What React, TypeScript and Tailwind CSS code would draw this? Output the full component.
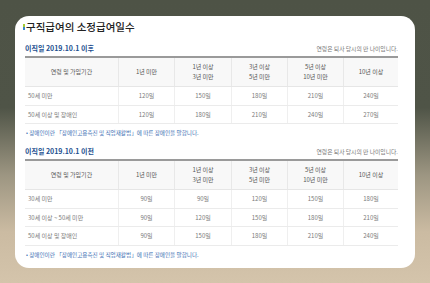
import React from "react";

const cols = "grid-cols-[93px_56px_57px_56px_56px_55px]";

type Row = { label: string; vals: string[] };

function Table({ rows }: { rows: Row[] }) {
  const headers: string[][] = [
    ["연령 및 가입기간"],
    ["1년 미만"],
    ["1년 이상", "3년 미만"],
    ["3년 이상", "5년 미만"],
    ["5년 이상", "10년 미만"],
    ["10년 이상"],
  ];
  return (
    <div className="w-[373px] border-t-2 border-[#9a9a9a]">
      <div className={`grid ${cols} h-[29px] bg-[#f8f8f8] border-b border-[#e6e6e6]`}>
        {headers.map((h, i) => (
          <div
            key={i}
            className={`flex flex-col items-center justify-center text-[6px] leading-[10px] text-[#555] ${i > 0 ? "border-l border-[#e8e8e8]" : ""}`}
          >
            {h.map((t, j) => (
              <span key={j}>{t}</span>
            ))}
          </div>
        ))}
      </div>
      {rows.map((r, ri) => (
        <div key={ri} className={`grid ${cols} h-[18.5px] border-b border-[#ebebeb]`}>
          <div className="flex items-center pl-[3px] text-[6px] text-[#7a7a7a]">{r.label}</div>
          {r.vals.map((v, vi) => (
            <div key={vi} className="flex items-center justify-center border-l border-[#efefef] text-[6px] text-[#7a7a7a]">
              {v}
            </div>
          ))}
        </div>
      ))}
    </div>
  );
}

function Section({ title, rows, top }: { title: string; rows: Row[]; top: string }) {
  return (
    <div className={top}>
      <div className="flex items-end justify-between w-[373px] h-[14px] pb-[3px]">
        <span className="text-[7px] font-bold text-[#1d4f8f] leading-[9px]">{title}</span>
        <span className="text-[5.8px] text-[#777] leading-[8px]">연령은 퇴사 당시의 만 나이입니다.</span>
      </div>
      <Table rows={rows} />
      <div className="mt-[5px] text-[5.6px] leading-[8px] text-[#3d6fb3] pl-[1px]">
        • 장애인이란 「장애인고용촉진 및 직업재활법」에 따른 장애인을 말합니다.
      </div>
    </div>
  );
}

export default function App() {
  return (
    <div
      className="w-[430px] h-[283px] overflow-hidden pt-[16px] pl-[15px] bg-[linear-gradient(to_bottom,#4e5346_0%,#4f5447_38%,#9d9682_62%,#cbbba2_82%,#d4c4ab_100%)]"
      style={{ fontFamily: '"Noto Sans CJK KR", "Noto Sans", sans-serif' }}
    >
      <div className="w-[400px] h-[252px] rounded-[14px] bg-white pl-[10px] pt-[3px]">
        <div className="flex items-center h-[16px]">
          <span className="w-[2px] h-[6px] bg-[linear-gradient(to_bottom,#a6c934_0%,#a6c934_45%,#3a86c8_55%,#3a86c8_100%)] mr-[1px] ml-[-2px]" />
          <span className="text-[10.5px] font-medium text-[#222] leading-[16px]">구직급여의 소정급여일수</span>
        </div>
        <Section
          top="mt-[7px]"
          title="이직일 2019.10.1 이후"
          rows={[
            { label: "50세 미만", vals: ["120일", "150일", "180일", "210일", "240일"] },
            { label: "50세 이상 및 장애인", vals: ["120일", "180일", "210일", "240일", "270일"] },
          ]}
        />
        <Section
          top="mt-[8px]"
          title="이직일 2019.10.1 이전"
          rows={[
            { label: "30세 미만", vals: ["90일", "90일", "120일", "150일", "180일"] },
            { label: "30세 이상 ~ 50세 미만", vals: ["90일", "120일", "150일", "180일", "210일"] },
            { label: "50세 이상 및 장애인", vals: ["90일", "150일", "180일", "210일", "240일"] },
          ]}
        />
      </div>
    </div>
  );
}
